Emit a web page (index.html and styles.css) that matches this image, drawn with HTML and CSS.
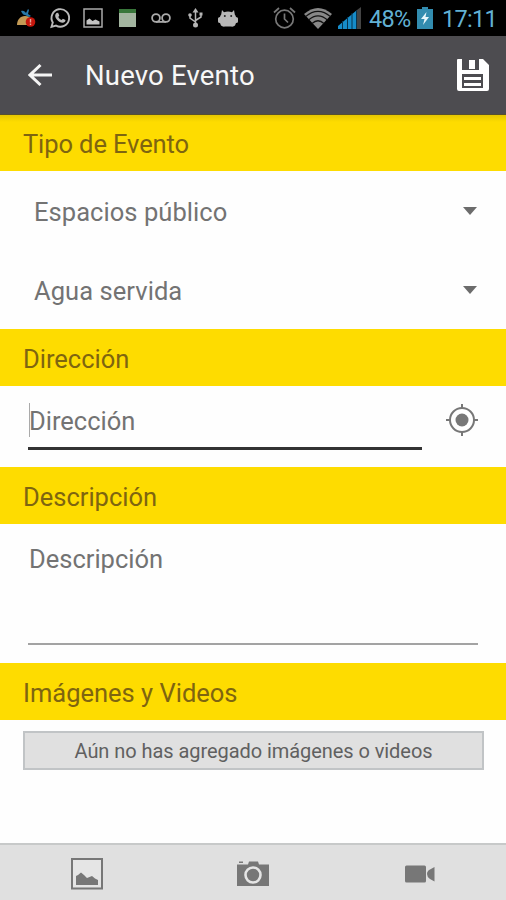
FILE: index.html
```html
<!DOCTYPE html>
<html lang="es">
<head>
<meta charset="utf-8">
<title>Nuevo Evento</title>
<link rel="stylesheet" href="styles.css">
</head>
<body>
<div class="status">
  <div class="notifications">
    <svg class="fruit" width="20" height="20" viewBox="0 0 20 20"><path d="M1 17c0-5 3-9 8-9 4 0 6 2 8 5l-3 4z" fill="#c39a55"/><path d="M5 3c3-1 4 1 5 2l2-4 1 1-1 4 3 2-2 1-4-2C7 7 6 5 5 3z" fill="#2778a8"/><circle cx="14.500" cy="14" r="4.800" fill="#c5160c"/><path d="M14.500 11v3.500M14.500 15.500v1.500" stroke="#e9a69b" stroke-width="1.400"/></svg>
    <svg class="whatsapp" width="22" height="22" viewBox="0 0 22 22"><path d="M2.500 19.800l1.300-4.300A8.800 8.800 0 1 1 7 18.600z" fill="none" stroke="#b9b9b9" stroke-width="1.900"/><path d="M7.500 6l1.600-.2 1.200 2.800-1 1.300c.8 1.500 1.900 2.500 3.400 3.100l1.200-1.300 2.600 1.400c0 1.800-1.500 2.700-3 2.600C9.600 15.300 6.600 12 6.200 9c0-1.200.4-2.200 1.300-3z" fill="#b9b9b9"/></svg>
    <svg class="picture" width="20" height="20" viewBox="0 0 20 20"><path d="M1 1h18v18H1z" fill="none" stroke="#aaa" stroke-width="1.500"/><path d="M3.500 16.500v-4l3-2 3 2.500 3-1.500 4 2v3z" fill="#c4c4c4"/></svg>
    <svg class="calendar" width="17" height="18" viewBox="0 0 17 18"><path d="M0 0h17v18H0z" fill="#a3b5a0"/><path d="M0 0h17v4H0z" fill="#38763a"/></svg>
    <svg class="voicemail" width="20" height="12" viewBox="0 0 20 12"><g fill="none" stroke="#aaa" stroke-width="1.800"><circle cx="5" cy="6" r="3.900"/><circle cx="15" cy="6" r="3.900"/><path d="M5 9.900h10"/></g></svg>
    <svg class="usb" width="15" height="20" viewBox="0 0 15 20"><path d="M7.500 16V3M7.500 14L2 10V7M7.500 12.500L13 9V6" fill="none" stroke="#b5b5b5" stroke-width="1.500"/><path d="M7.500 0l3 4.500h-6z" fill="#b5b5b5"/><circle cx="7.500" cy="17" r="2.500" fill="#b5b5b5"/><circle cx="2" cy="7" r="1.800" fill="#b5b5b5"/><path d="M11.500 4.500h3v3h-3z" fill="#b5b5b5"/></svg>
    <svg class="android" width="20" height="17" viewBox="0 0 20 17"><path d="M4 0l2 2.300q4-1.500 8 0L16 0l.8 4.500q1 1 1.200 2.500 2 0 2 1.500v3q0 1.500-2 1.500l-1 2.500q-1.500 1.500-4 1H7q-2.500.5-4-1L2 13q-2 0-2-1.500v-3Q0 7 2 7q.2-1.500 1.200-2.500z" fill="#b8b8b8"/><circle cx="6.800" cy="6" r="1" fill="#222"/><circle cx="13.200" cy="6" r="1" fill="#222"/></svg>
  </div>
  <div class="system">
    <svg class="alarm" width="23" height="22" viewBox="0 0 23 22"><g fill="none" stroke="#777" stroke-width="1.700"><circle cx="11.500" cy="12" r="8.800"/><path d="M11.500 6.500V12l3.500 3.500M1 5.500L6 1M22 5.500L17 1"/></g></svg>
    <svg class="wifi" width="28" height="21" viewBox="0 0 28 21"><path d="M0 6Q14-6 28 6L14 21z" fill="#888"/><path d="M1.500 8.600Q14-2 26.500 8.600M4.500 12Q14 3.700 23.500 12M8 15.500Q14 10 20 15.500" fill="none" stroke="#111" stroke-width="1.200"/></svg>
    <svg class="signal" width="23" height="22" viewBox="0 0 23 22"><path d="M0 22v-3l19-16v19z" fill="#168cc9"/><path d="M19 3l4-3v22h-4z" fill="#444"/><path d="M4.500 14v8M9.500 10v12M14 6v16M18.500 3v19" stroke="#06344f"/></svg>
    <span class="percent">48%</span>
    <svg class="battery" width="16" height="22" viewBox="0 0 16 22"><path d="M5 0h6v2h5v20H0V2h5z" fill="#328caf"/><path d="M9.500 5L4 12h3.500L6 18l6-8H8.500z" fill="#e6f5fa"/></svg>
    <span class="clock">17:11</span>
  </div>
</div>
<header class="appbar">
  <svg class="back" width="24" height="24" viewBox="0 0 24 24"><path d="M12.500 2L2 12l10.500 10M2 12h22" fill="none" stroke="#f4f4f4" stroke-width="3"/></svg>
  <h1 class="title">Nuevo Evento</h1>
  <svg class="save" width="32" height="32" viewBox="0 0 32 32"><path fill="#fff" fill-rule="evenodd" d="M1 0h4v11h17V0h4l6 6v24q0 2-2 2H2q-2 0-2-2V1q0-1 1-1zM5 15v14h21V15z"/><path fill="#fff" d="M12 1h6v9h-6zM7 18h17v3H7zM7 24h17v3H7z"/></svg>
</header>
<main class="form">
  <h2 class="section first">Tipo de Evento</h2>
  <div class="select"><span>Espacios público</span><i class="caret"></i></div>
  <div class="select"><span>Agua servida</span><i class="caret"></i></div>
  <h2 class="section">Dirección</h2>
  <div class="address">
    <div class="input">Dirección</div>
    <svg class="locate" width="34" height="34" viewBox="0 0 34 34"><circle cx="17" cy="17" r="12" fill="none" stroke="#777" stroke-width="2"/><circle cx="17" cy="17" r="6.500" fill="#777"/><path d="M17 1v5M17 28v5M1 17h5M28 17h5" stroke="#777" stroke-width="2"/></svg>
  </div>
  <h2 class="section">Descripción</h2>
  <div class="description"><div class="textarea">Descripción</div></div>
  <h2 class="section">Imágenes y Videos</h2>
  <div class="empty">Aún no has agregado imágenes o videos</div>
</main>
<footer class="tabs">
  <div class="tab gallery"><svg width="32" height="32" viewBox="0 0 32 32"><path d="M1 1h30v29.500H1z" fill="#e5e5e5" stroke="#777" stroke-width="2"/><path d="M5 27v-9l2-1 3-2.500 3 2.500 3 3 5-2 3 2.500 3 1.500v5z" fill="#777"/></svg></div>
  <div class="tab"><svg width="32" height="26" viewBox="0 0 32 26"><path d="M0 3.500h11l1-3h9l1 3h10V25H0zM2 .5h4v1.500H2z" fill="#777"/><circle cx="16" cy="14" r="7.500" fill="#777" stroke="#e5e5e5" stroke-width="2.600"/></svg></div>
  <div class="tab video"><svg width="30" height="18" viewBox="0 0 30 18"><rect y=".5" width="21" height="17" rx="1.500" fill="#777"/><path d="M22 9q0-3 3-4.500L29.500 2v14.500L25 14q-3-2-3-5z" fill="#777"/></svg></div>
</footer>
</body>
</html>
```
FILE: styles.css
```css
* { box-sizing: border-box; }
body { margin: 0; width: 506px; height: 900px; display: flex; flex-direction: column; background: #fefefe; font-family: Roboto, sans-serif; color: #737373; overflow: hidden; }
svg { display: block; flex: none; }
h1, h2 { margin: 0; font-weight: 400; }

.status { flex: none; height: 36px; background: #000; display: flex; justify-content: space-between; padding: 0 9px 0 16px; color: #62b1d4; }
.notifications, .system { display: flex; align-items: center; }
.whatsapp { margin-left: 13px; }
.picture { margin-left: 12px; }
.calendar { margin-left: 16px; }
.voicemail { margin-left: 15px; }
.usb { margin-left: 17px; }
.android { margin-left: 15px; }
.wifi { margin-left: 8px; }
.signal { margin-left: 6px; }
.percent { width: 42px; margin-left: 8px; font-size: 23.500px; letter-spacing: -0.700px; white-space: nowrap; padding-top: 2px; }
.battery { margin-left: 6px; }
.clock { width: 55px; margin-left: 9px; font-size: 23.500px; letter-spacing: -0.700px; white-space: nowrap; padding-top: 2px; }

.appbar { flex: none; height: 79px; background: #4d4c50; border-bottom: 1px solid #57502c; display: flex; align-items: center; padding: 0 17px 0 28px; color: #f7f7f7; }
.title { flex: 1; margin-left: 33px; font-size: 27.500px; letter-spacing: 0.200px; line-height: 32px; padding-top: 2px; }
.save { margin-top: -1px; }

.form { flex: 1; display: flex; flex-direction: column; }
.section { flex: none; height: 57px; padding: 2px 23px 0; background: #fedc00; color: #7e6510; font-size: 25.500px; line-height: 56px; }
.first { height: 56px; padding-top: 1px; letter-spacing: -0.100px; background: linear-gradient(#e5c600, #fedc00 7px); }
.select { flex: none; height: 79px; padding: 3px 29px 0 34px; display: flex; align-items: center; justify-content: space-between; font-size: 25.500px; letter-spacing: 0.060px; }
.caret { border: 7px solid transparent; border-top: 8px solid #6c6c6c; border-bottom: 0; margin-top: -3px; }
.address { flex: none; height: 81px; padding: 0 27px 0 28px; display: flex; justify-content: space-between; }
.input { width: 394px; height: 64px; border-bottom: 3px solid #333; font-size: 25.500px; line-height: 71px; background: linear-gradient(#aaa, #aaa) 1px 17px / 1px 34px no-repeat; padding-left: 1px; }
.locate { margin: 17px 0 0; }
.description { flex: none; height: 139px; padding: 0 28px; }
.textarea { height: 121px; border-bottom: 2px solid #a3a3a3; padding-left: 1px; font-size: 25.500px; line-height: 70px; }
.empty { height: 39px; margin: 11px 22px 0 23px; border: 2px solid #c1c4c6; background: #e0e0e0; color: #606060; text-align: center; font-size: 20px; letter-spacing: -0.060px; line-height: 36px; white-space: nowrap; }

.tabs { flex: none; height: 57px; background: #e0e0e0; border-top: 2px solid #c7c9c9; display: grid; grid-template-columns: repeat(3, 1fr); padding-top: 2px; }
.tab { display: flex; align-items: center; justify-content: center; }
.gallery { padding-left: 5px; }
.video { padding-right: 3px; }
```
